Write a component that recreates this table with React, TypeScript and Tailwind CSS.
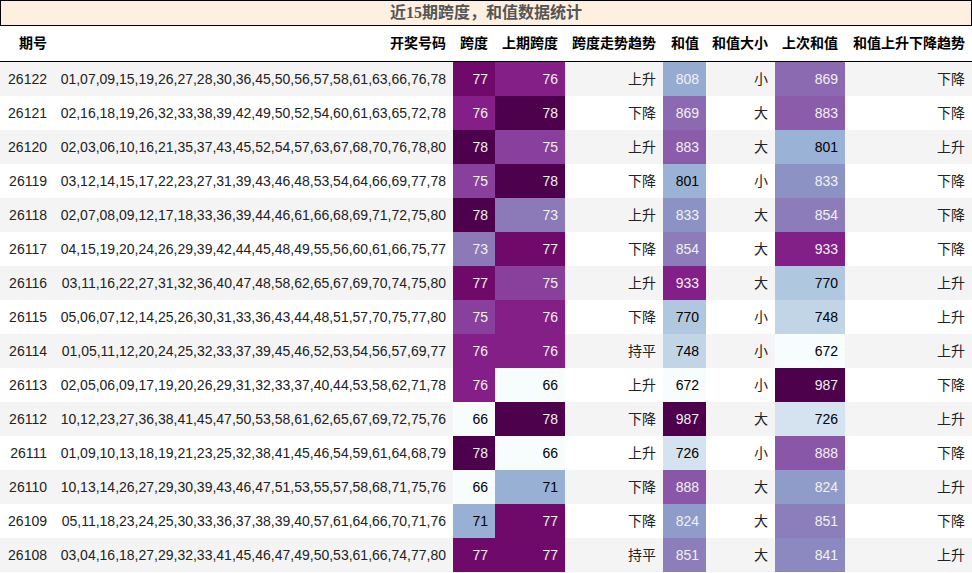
import React from "react";

type Row = [number, string, number, number, string, number, string, number, string];

const rows: Row[] = [
  [26122, "01,07,09,15,19,26,27,28,30,36,45,50,56,57,58,61,63,66,76,78", 77, 76, "上升", 808, "小", 869, "下降"],
  [26121, "02,16,18,19,26,32,33,38,39,42,49,50,52,54,60,61,63,65,72,78", 76, 78, "下降", 869, "大", 883, "下降"],
  [26120, "02,03,06,10,16,21,35,37,43,45,52,54,57,63,67,68,70,76,78,80", 78, 75, "上升", 883, "大", 801, "上升"],
  [26119, "03,12,14,15,17,22,23,27,31,39,43,46,48,53,54,64,66,69,77,78", 75, 78, "下降", 801, "小", 833, "下降"],
  [26118, "02,07,08,09,12,17,18,33,36,39,44,46,61,66,68,69,71,72,75,80", 78, 73, "上升", 833, "大", 854, "下降"],
  [26117, "04,15,19,20,24,26,29,39,42,44,45,48,49,55,56,60,61,66,75,77", 73, 77, "下降", 854, "大", 933, "下降"],
  [26116, "03,11,16,22,27,31,32,36,40,47,48,58,62,65,67,69,70,74,75,80", 77, 75, "上升", 933, "大", 770, "上升"],
  [26115, "05,06,07,12,14,25,26,30,31,33,36,43,44,48,51,57,70,75,77,80", 75, 76, "下降", 770, "小", 748, "上升"],
  [26114, "01,05,11,12,20,24,25,32,33,37,39,45,46,52,53,54,56,57,69,77", 76, 76, "持平", 748, "小", 672, "上升"],
  [26113, "02,05,06,09,17,19,20,26,29,31,32,33,37,40,44,53,58,62,71,78", 76, 66, "上升", 672, "小", 987, "下降"],
  [26112, "10,12,23,27,36,38,41,45,47,50,53,58,61,62,65,67,69,72,75,76", 66, 78, "下降", 987, "大", 726, "上升"],
  [26111, "01,09,10,13,18,19,21,23,25,32,38,41,45,46,54,59,61,64,68,79", 78, 66, "上升", 726, "小", 888, "下降"],
  [26110, "10,13,14,26,27,29,30,39,43,46,47,51,53,55,57,58,68,71,75,76", 66, 71, "下降", 888, "大", 824, "上升"],
  [26109, "05,11,18,23,24,25,30,33,36,37,38,39,40,57,61,64,66,70,71,76", 71, 77, "下降", 824, "大", 851, "下降"],
  [26108, "03,04,16,18,27,29,32,33,41,45,46,47,49,50,53,61,66,74,77,80", 77, 77, "持平", 851, "大", 841, "上升"],
];

const BUPU = [
  [0xf7, 0xfc, 0xfd],
  [0xe0, 0xec, 0xf4],
  [0xbf, 0xd3, 0xe6],
  [0x9e, 0xbc, 0xda],
  [0x8c, 0x96, 0xc6],
  [0x8c, 0x6b, 0xb1],
  [0x88, 0x41, 0x9d],
  [0x81, 0x0f, 0x7c],
  [0x4d, 0x00, 0x4b],
];

function bupu(t: number): number[] {
  const idx = Math.min(255, Math.max(0, Math.floor(t * 256)));
  const x = (idx / 255) * 8;
  const i = Math.min(7, Math.floor(x));
  const f = x - i;
  const a = BUPU[i];
  const b = BUPU[i + 1];
  return [0, 1, 2].map((k) => Math.round(a[k] + (b[k] - a[k]) * f));
}

function lum(c: number[]): number {
  const lin = c.map((v) => {
    const s = v / 255;
    return s <= 0.03928 ? s / 12.92 : Math.pow((s + 0.055) / 1.055, 2.4);
  });
  return 0.2126 * lin[0] + 0.7152 * lin[1] + 0.0722 * lin[2];
}

function cellStyle(v: number, min: number, max: number): React.CSSProperties {
  const c = bupu((v - min) / (max - min));
  return {
    backgroundColor: `rgb(${c[0]},${c[1]},${c[2]})`,
    color: lum(c) < 0.408 ? "#f1f1f1" : "#000000",
  };
}

function range(col: number): [number, number] {
  const vals = rows.map((r) => r[col] as number);
  return [Math.min(...vals), Math.max(...vals)];
}

const r2 = range(2);
const r3 = range(3);
const r5 = range(5);
const r7 = range(7);

const headers = ["期号", "开奖号码", "跨度", "上期跨度", "跨度走势趋势", "和值", "和值大小", "上次和值", "和值上升下降趋势"];

const gridCols = "grid grid-cols-[54px_399px_42px_70px_98px_43px_69px_70px_127px]";
const cell = "flex items-center justify-end pr-[7px] whitespace-nowrap";

export default function App() {
  return (
    <div
      className="w-[972px] h-[573px] bg-white text-[14px] text-[#222]"
      style={{ fontFamily: '"Liberation Sans", "Noto Sans CJK SC", sans-serif' }}
    >
      <div
        className="h-[26px] border border-black bg-[#fdf0e1] flex items-center justify-center text-[16px] font-bold text-[#555]"
        style={{ fontFamily: '"Liberation Serif", "Noto Sans CJK SC", serif' }}
      >
        近15期跨度，和值数据统计
      </div>
      <div className={`${gridCols} h-[36px] border-b border-black font-bold text-black`}>
        {headers.map((h) => (
          <div key={h} className={cell}>
            {h}
          </div>
        ))}
      </div>
      {rows.map((r, i) => (
        <div key={r[0]} className={`${gridCols} h-[34px] ${i % 2 === 0 ? "bg-[#f4f4f4]" : "bg-white"}`}>
          <div className={cell}>{r[0]}</div>
          <div className={cell}>{r[1]}</div>
          <div className={cell} style={cellStyle(r[2], r2[0], r2[1])}>
            {r[2]}
          </div>
          <div className={cell} style={cellStyle(r[3], r3[0], r3[1])}>
            {r[3]}
          </div>
          <div className={cell}>{r[4]}</div>
          <div className={cell} style={cellStyle(r[5], r5[0], r5[1])}>
            {r[5]}
          </div>
          <div className={cell}>{r[6]}</div>
          <div className={cell} style={cellStyle(r[7], r7[0], r7[1])}>
            {r[7]}
          </div>
          <div className={cell}>{r[8]}</div>
        </div>
      ))}
    </div>
  );
}
